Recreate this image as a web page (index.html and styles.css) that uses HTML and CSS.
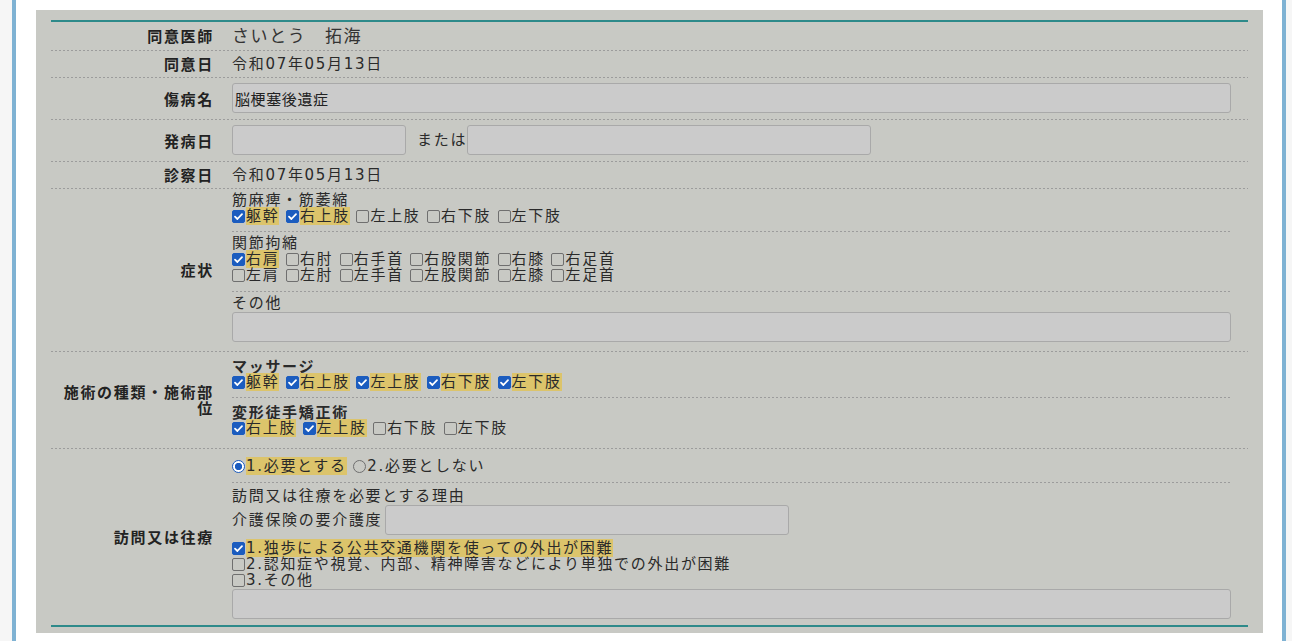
FILE: index.html
```html
<!DOCTYPE html>
<html lang="ja">
<head>
<meta charset="utf-8">
<title>同意書</title>
<link rel="stylesheet" href="styles.css">
</head>
<body>
<div class="frame">
  <div class="panel">
    <div class="table">
      <div class="row">
        <div class="th">同意医師</div>
        <div class="td td-big">さいとう　拓海</div>
      </div>
      <div class="row">
        <div class="th">同意日</div>
        <div class="td td-text">令和07年05月13日</div>
      </div>
      <div class="row">
        <div class="th">傷病名</div>
        <div class="td td-input"><input class="field field-full" type="text" value="脳梗塞後遺症"></div>
      </div>
      <div class="row">
        <div class="th">発病日</div>
        <div class="td td-input">
          <div class="inline-fields">
            <input class="field field-s" type="text" value="">
            <span class="or">または</span>
            <input class="field field-m" type="text" value="">
          </div>
        </div>
      </div>
      <div class="row">
        <div class="th">診察日</div>
        <div class="td td-text">令和07年05月13日</div>
      </div>
      <div class="row">
        <div class="th">症状</div>
        <div class="td td-subs">
          <div class="sub s1">
            <div class="cap">筋麻痺・筋萎縮</div>
            <div class="opts"><label class="opt"><span class="cb on"><svg viewBox="0 0 13 13"><path d="M3 6.6 L5.4 9 L10 4.2"/></svg></span><span class="hl">躯幹</span></label> <label class="opt"><span class="cb on"><svg viewBox="0 0 13 13"><path d="M3 6.6 L5.4 9 L10 4.2"/></svg></span><span class="hl">右上肢</span></label> <label class="opt"><span class="cb"></span>左上肢</label> <label class="opt"><span class="cb"></span>右下肢</label> <label class="opt"><span class="cb"></span>左下肢</label></div>
          </div>
          <div class="sub s2">
            <div class="cap">関節拘縮</div>
            <div class="opts"><label class="opt"><span class="cb on"><svg viewBox="0 0 13 13"><path d="M3 6.6 L5.4 9 L10 4.2"/></svg></span><span class="hl">右肩</span></label> <label class="opt"><span class="cb"></span>右肘</label> <label class="opt"><span class="cb"></span>右手首</label> <label class="opt"><span class="cb"></span>右股関節</label> <label class="opt"><span class="cb"></span>右膝</label> <label class="opt"><span class="cb"></span>右足首</label></div>
            <div class="opts"><label class="opt"><span class="cb"></span>左肩</label> <label class="opt"><span class="cb"></span>左肘</label> <label class="opt"><span class="cb"></span>左手首</label> <label class="opt"><span class="cb"></span>左股関節</label> <label class="opt"><span class="cb"></span>左膝</label> <label class="opt"><span class="cb"></span>左足首</label></div>
          </div>
          <div class="sub s3">
            <div class="cap">その他</div>
            <input class="field field-full field-block" type="text" value="">
          </div>
        </div>
      </div>
      <div class="row">
        <div class="th">施術の種類・施術部位</div>
        <div class="td td-subs">
          <div class="sub t1">
            <div class="cap cap-b">マッサージ</div>
            <div class="opts"><label class="opt"><span class="cb on"><svg viewBox="0 0 13 13"><path d="M3 6.6 L5.4 9 L10 4.2"/></svg></span><span class="hl">躯幹</span></label> <label class="opt"><span class="cb on"><svg viewBox="0 0 13 13"><path d="M3 6.6 L5.4 9 L10 4.2"/></svg></span><span class="hl">右上肢</span></label> <label class="opt"><span class="cb on"><svg viewBox="0 0 13 13"><path d="M3 6.6 L5.4 9 L10 4.2"/></svg></span><span class="hl">左上肢</span></label> <label class="opt"><span class="cb on"><svg viewBox="0 0 13 13"><path d="M3 6.6 L5.4 9 L10 4.2"/></svg></span><span class="hl">右下肢</span></label> <label class="opt"><span class="cb on"><svg viewBox="0 0 13 13"><path d="M3 6.6 L5.4 9 L10 4.2"/></svg></span><span class="hl">左下肢</span></label></div>
          </div>
          <div class="sub t2">
            <div class="cap cap-b">変形徒手矯正術</div>
            <div class="opts"><label class="opt"><span class="cb on"><svg viewBox="0 0 13 13"><path d="M3 6.6 L5.4 9 L10 4.2"/></svg></span><span class="hl">右上肢</span></label> <label class="opt"><span class="cb on"><svg viewBox="0 0 13 13"><path d="M3 6.6 L5.4 9 L10 4.2"/></svg></span><span class="hl">左上肢</span></label> <label class="opt"><span class="cb"></span>右下肢</label> <label class="opt"><span class="cb"></span>左下肢</label></div>
          </div>
        </div>
      </div>
      <div class="row row-last">
        <div class="th">訪問又は往療</div>
        <div class="td td-subs">
          <div class="sub v1">
            <div class="opts opts-radio"><label class="opt"><span class="rb on"></span><span class="hl">1.必要とする</span></label> <label class="opt"><span class="rb"></span>2.必要としない</label></div>
          </div>
          <div class="sub v2">
            <div class="cap">訪問又は往療を必要とする理由</div>
            <div class="inline-fields care">
              <span class="care-label">介護保険の要介護度</span>
              <input class="field field-m" type="text" value="">
            </div>
            <div class="reasons">
              <div class="opts"><label class="opt"><span class="cb on"><svg viewBox="0 0 13 13"><path d="M3 6.6 L5.4 9 L10 4.2"/></svg></span><span class="hl">1.独歩による公共交通機関を使っての外出が困難</span></label></div>
              <div class="opts"><label class="opt"><span class="cb"></span>2.認知症や視覚、内部、精神障害などにより単独での外出が困難</label></div>
              <div class="opts"><label class="opt"><span class="cb"></span>3.その他</label></div>
            </div>
            <input class="field field-full field-block" type="text" value="">
          </div>
        </div>
      </div>
    </div>
  </div>
</div>
</body>
</html>
```
FILE: styles.css
```css
html, body {
  margin: 0;
  padding: 0;
}

body {
  background: #f6f6f6;
  font-family: "DejaVu Sans", "Noto Sans CJK JP", sans-serif;
  font-size: 15px;
  color: #2a2a2a;
  letter-spacing: 1.7px;
}

.frame {
  box-sizing: border-box;
  margin-left: 12px;
  width: 1274px;
  min-height: 641px;
  background: #ffffff;
  border-left: 4px solid #7fb2d3;
  border-right: 4px solid #7fb2d3;
  padding: 10px 19px 0 20px;
}

.panel {
  background: #c8c9c4;
  padding: 10px 15px 6px;
}

.table {
  border-top: 2px solid #2e8a8a;
  border-bottom: 2px solid #2e8a8a;
}

.row {
  display: grid;
  grid-template-columns: 172px 1fr;
  padding-bottom: 1px;
  background-image: linear-gradient(to right, #9c9c9c 50%, transparent 50%);
  background-size: 4px 1px;
  background-repeat: repeat-x;
  background-position: left bottom;
}

.row-last {
  padding-bottom: 0;
  background: none;
}

.th {
  display: flex;
  align-items: center;
  justify-content: flex-end;
  text-align: right;
  padding-right: 9px;
  font-family: "Noto Sans CJK JP", sans-serif;
  font-weight: bold;
  line-height: 16px;
  color: #222;
}

.td {
  padding-left: 9px;
  padding-right: 17px;
  min-width: 0;
}

.td-big {
  font-size: 17px;
  line-height: 20px;
  padding-top: 4px;
  padding-bottom: 4px;
  letter-spacing: 1.6px;
  color: #333;
}

.td-text {
  line-height: 16px;
  padding-top: 5px;
  padding-bottom: 5px;
}

.td-input {
  padding-top: 5px;
  padding-bottom: 6px;
}

.field {
  box-sizing: border-box;
  display: inline-block;
  height: 30px;
  margin: 0;
  padding: 0 2px;
  border: 1px solid #a9a9a9;
  border-radius: 3px;
  background: #cbcbcb;
  font-family: "Noto Sans CJK JP", sans-serif;
  font-size: 15px;
  letter-spacing: 0.6px;
  color: #222;
  outline: none;
  vertical-align: top;
}

.field-full {
  width: 100%;
}

.field-block {
  display: block;
}

.field-s {
  width: 174px;
}

.field-m {
  width: 404px;
}

.inline-fields {
  display: flex;
  align-items: center;
}

.or {
  margin-left: 11px;
  margin-right: 0;
  line-height: 16px;
}

.td-subs {
  display: flex;
  flex-direction: column;
}

.sub {
  line-height: 16px;
}

.sub + .sub {
  background-image: linear-gradient(to right, #9c9c9c 50%, transparent 50%);
  background-size: 4px 1px;
  background-repeat: repeat-x;
  background-position: left top;
}

.s1 { padding: 3px 0 7px; }
.s2 { padding: 4px 0 8px; }
.s3 { padding: 4px 0 9px; }
.s3 .field { margin-top: 1px; }

.t1 { padding: 5px 0 7px; }
.t2 { padding: 6px 0 12px; }

.v1 { padding: 8px 0 7px; }
.v2 { padding: 6px 0 6px; }

.cap {
  white-space: nowrap;
}

.cap-b {
  font-family: "Noto Sans CJK JP", sans-serif;
  font-weight: bold;
  line-height: 17px;
}

.opts {
  white-space: nowrap;
}

.opts-radio {
  line-height: 18px;
}

.opt {
  white-space: nowrap;
}

.cb {
  box-sizing: border-box;
  display: inline-block;
  width: 13px;
  height: 13px;
  margin-right: 1px;
  border: 1px solid #6f6f6f;
  border-radius: 2px;
  vertical-align: -2px;
  position: relative;
}

.cb.on {
  background: #1b5cbf;
  border-color: #1b5cbf;
}

.cb svg {
  position: absolute;
  left: -1px;
  top: -1px;
  width: 13px;
  height: 13px;
  fill: none;
  stroke: #ffffff;
  stroke-width: 1.8;
  stroke-linecap: round;
  stroke-linejoin: round;
}

.rb {
  box-sizing: border-box;
  display: inline-block;
  width: 13px;
  height: 13px;
  margin-right: 1px;
  border: 1px solid #6f6f6f;
  border-radius: 50%;
  vertical-align: -2px;
}

.rb.on {
  border: 1.5px solid #1b5cbf;
  background: radial-gradient(circle, #1b5cbf 0 3.4px, #ffffff 3.9px);
}

.hl {
  background: #dcc46b;
}

.care {
  margin-top: 1px;
}

.care-label {
  margin-right: 3px;
  line-height: 16px;
}

.reasons {
  margin-top: 5px;
}

.v2 > .field {
  margin-top: 1px;
}
```
